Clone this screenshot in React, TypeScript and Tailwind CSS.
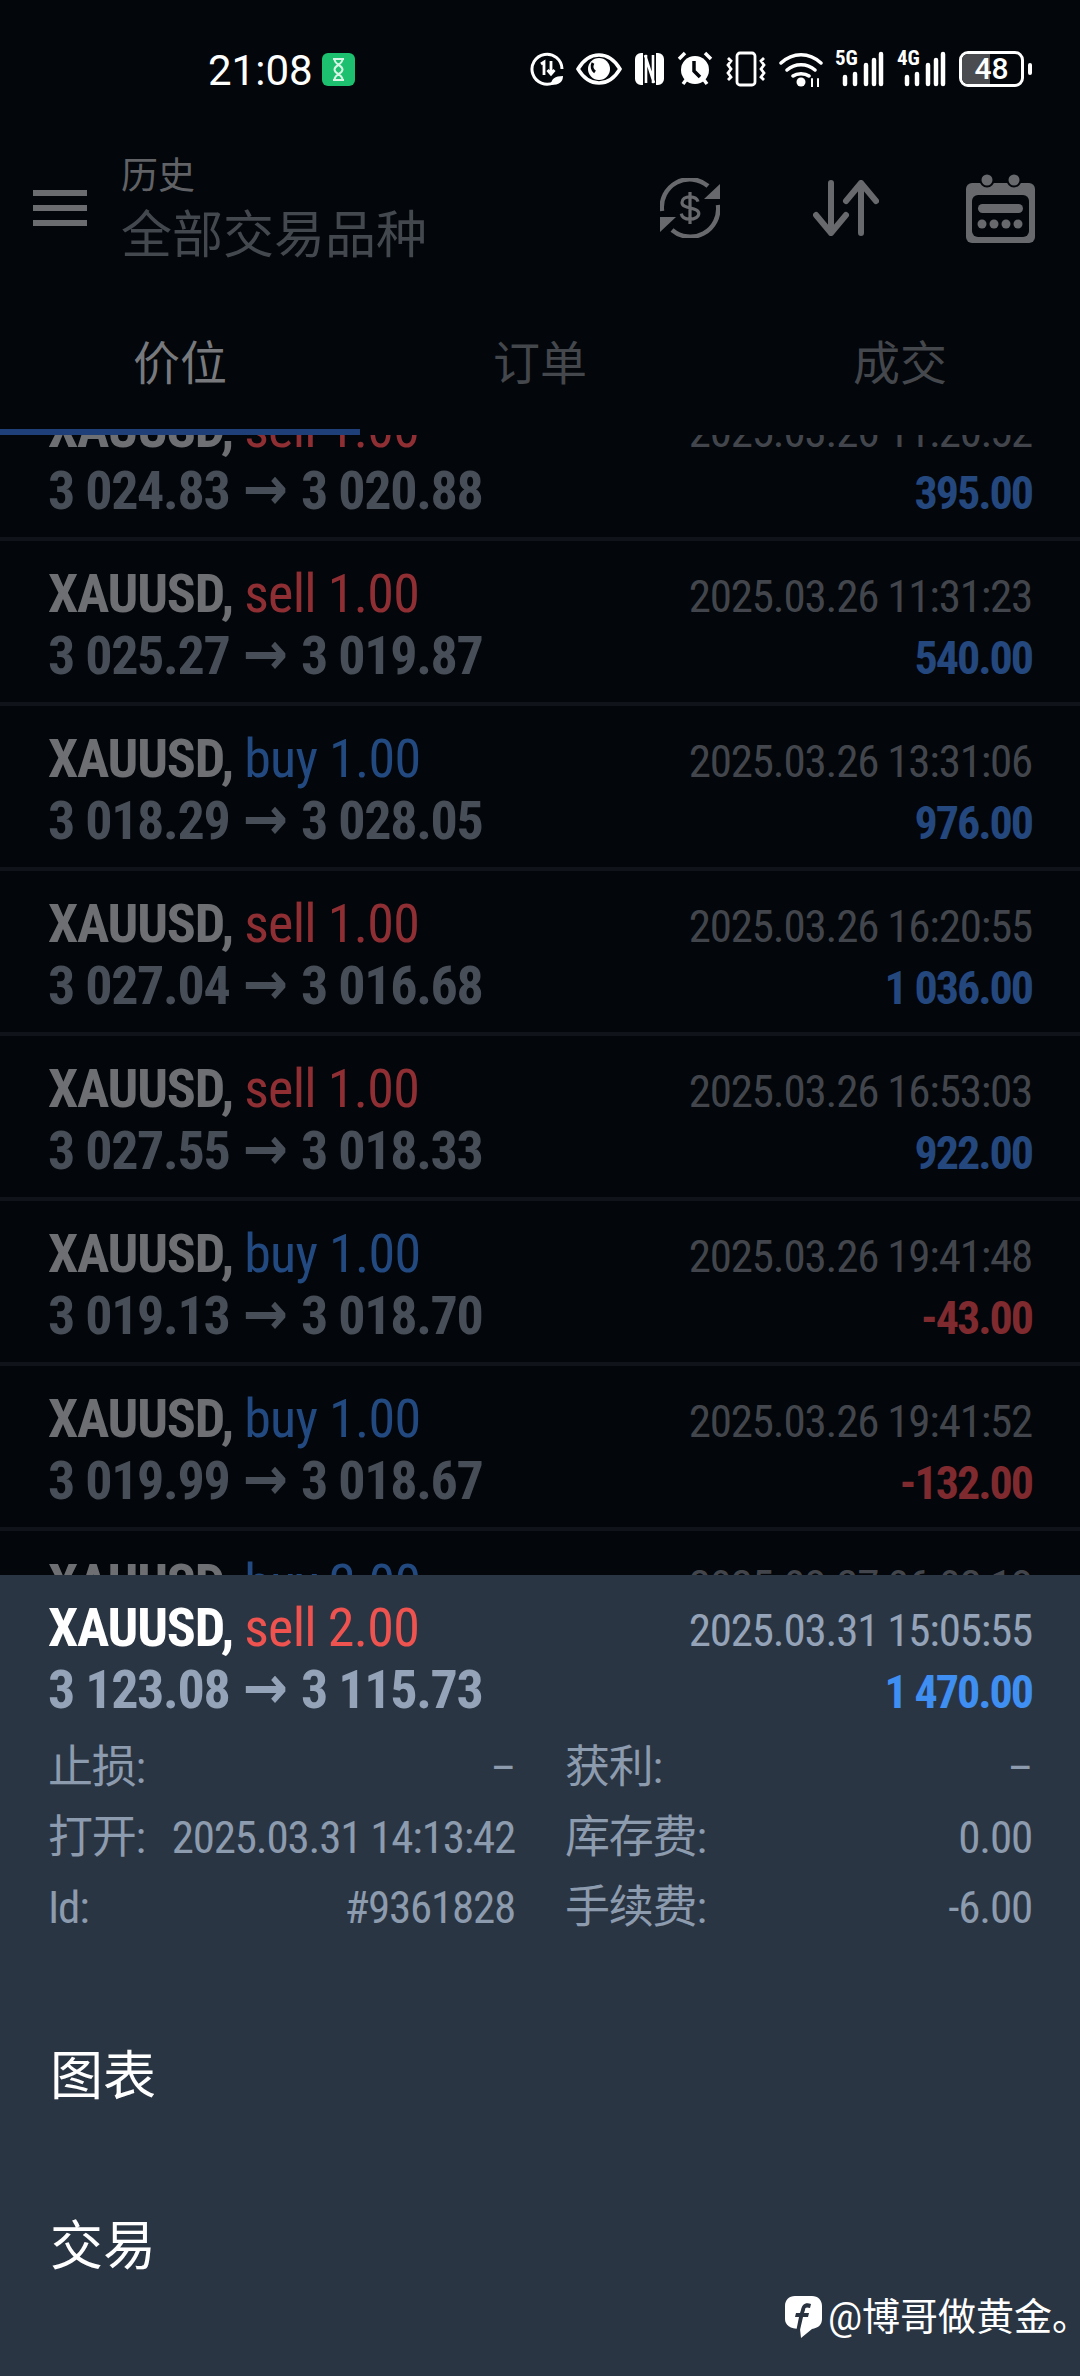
const trades = [
  { side: 'sell', lots: '1.00', prices: '3 024.83 → 3 020.88', date: '2025.03.26 11:20:52', profit: '395.00' },
  { side: 'sell', lots: '1.00', prices: '3 025.27 → 3 019.87', date: '2025.03.26 11:31:23', profit: '540.00' },
  { side: 'buy', lots: '1.00', prices: '3 018.29 → 3 028.05', date: '2025.03.26 13:31:06', profit: '976.00' },
  { side: 'sell', lots: '1.00', prices: '3 027.04 → 3 016.68', date: '2025.03.26 16:20:55', profit: '1 036.00' },
  { side: 'sell', lots: '1.00', prices: '3 027.55 → 3 018.33', date: '2025.03.26 16:53:03', profit: '922.00' },
  { side: 'buy', lots: '1.00', prices: '3 019.13 → 3 018.70', date: '2025.03.26 19:41:48', profit: '-43.00' },
  { side: 'buy', lots: '1.00', prices: '3 019.99 → 3 018.67', date: '2025.03.26 19:41:52', profit: '-132.00' },
  { side: 'buy', lots: '2.00', prices: '3 020.14 → 3 031.20', date: '2025.03.27 06:02:13', profit: '2 212.00' },
]

function StatusIcons() {
  return (
    <div className="flex items-center gap-[12px] text-white">
      {/* data saver */}
      <svg width="34" height="34" viewBox="0 0 34 34" fill="none" stroke="currentColor">
        <path d="M24 30.5A15 15 0 1 1 32 17" strokeWidth="3" />
        <path d="M11 12l3-2v13M21 9v13m-3.5-4l3.5 4 3.500-4" strokeWidth="2.800" />
        <path d="M21 33c0-6 4-9 12-9 0 6-4 9-12 9z" fill="currentColor" stroke="none" />
      </svg>
      {/* eye comfort */}
      <svg width="46" height="34" viewBox="0 0 46 34" fill="none" stroke="currentColor">
        <path d="M2 17C8 7 15 3 23 3s15 4 21 14c-6 10-13 14-21 14S8 27 2 17z" strokeWidth="3.500" />
        <circle cx="23" cy="17" r="11" fill="currentColor" stroke="none" />
        <path d="M17 11a7 7 0 0 0 2 9" stroke="#03060b" strokeWidth="3" />
      </svg>
      {/* nfc */}
      <svg width="31" height="34" viewBox="0 0 31 34" fill="none">
        <path d="M9 1H7a6 6 0 0 0-6 6v20a6 6 0 0 0 6 6h2zM22 1h2a6 6 0 0 1 6 6v20a6 6 0 0 1-6 6h-2z" fill="currentColor" />
        <path d="M12 3v28M19 3v28M11 3l9 28" stroke="currentColor" strokeWidth="2.600" />
      </svg>
      {/* alarm */}
      <svg width="36" height="36" viewBox="0 0 36 36" fill="currentColor">
        <circle cx="18" cy="19" r="14" />
        <path d="M17 10v10l6 6" fill="none" stroke="#03060b" strokeWidth="3.500" />
        <path d="M2 8l6-6M34 8l-6-6M6 33l3-4M30 33l-3-4" fill="none" stroke="currentColor" strokeWidth="3.500" />
      </svg>
      {/* vibrate */}
      <svg width="42" height="36" viewBox="0 0 42 36" fill="none" stroke="currentColor" strokeWidth="2.800">
        <rect x="12" y="2" width="18" height="32" rx="3" />
        <path d="M3 7l3 3-3 4 3 4-3 4 3 4-3 3M39 7l-3 3 3 4-3 4 3 4-3 4 3 3" />
      </svg>
      {/* wifi */}
      <svg width="44" height="36" viewBox="0 0 44 36" fill="none" stroke="currentColor" strokeWidth="3.500" strokeLinecap="round">
        <path d="M2 12C14 1 30 1 42 12M8 19c8-7 20-7 28 0M14 25c4-3 12-3 16 0" />
        <circle cx="22" cy="31" r="4.500" fill="currentColor" stroke="none" />
        <path d="M33 28v8M39 28v8" strokeWidth="2" />
      </svg>
      <Signal label="5G" />
      <Signal label="4G" />
      {/* battery */}
      <div className="flex items-center gap-[4px]">
        <div className="relative flex h-[36px] w-[65px] overflow-hidden rounded-[9px] border-[3px] border-white">
          <div className="w-[48%] bg-[#4a4c50]" />
          <span className="absolute inset-0 flex items-center justify-center text-[30px] font-medium leading-none">48</span>
        </div>
        <div className="h-[12px] w-[4px] rounded-full bg-white" />
      </div>
    </div>
  )
}

function Signal({ label }: { label: string }) {
  return (
    <div className="relative h-[36px] w-[50px]">
      <span className="absolute left-0 top-[-3px] text-[21px] font-bold leading-[20px] font-stretch-[75%]">{label}</span>
      <svg className="absolute inset-0" width="50" height="36" viewBox="0 0 50 36" stroke="currentColor" strokeWidth="4.500" strokeLinecap="round">
        <path d="M10 26v7M20 23v10M31 14v19M46 3v30M39 9v24" />
      </svg>
    </div>
  )
}

function ExchangeIcon() {
  return (
    <svg width="60" height="60" viewBox="0 0 60 60" fill="none" stroke="#67696d">
      <path d="M2 33A28 28 0 0 1 48 8M58 27A28 28 0 0 1 12 52" strokeWidth="4.500" />
      <path d="M60 6v15H44zM0 54V39h16z" fill="#67696d" stroke="none" />
      <path d="M40 22c-1-4-5-6-10-6-6 0-10 3-10 7 0 9 21 5 21 14 0 4-5 7-11 7-6 0-10-2-11-7M30 10v40" strokeWidth="4" transform="translate(6 6) scale(.8)" />
    </svg>
  )
}

function SortIcon() {
  return (
    <svg width="66" height="56" viewBox="0 0 66 56" fill="none" stroke="#67696d" strokeWidth="6" strokeLinecap="round" strokeLinejoin="round">
      <path d="M18 3v50M3 35l15 18 15-18M48 3v50M33 21L48 3l15 18" />
    </svg>
  )
}

function CalendarIcon() {
  return (
    <svg width="69" height="69" viewBox="0 0 69 69" fill="#67696d">
      <path d="M6 9h57a6 6 0 0 1 6 6v48a6 6 0 0 1-6 6H6a6 6 0 0 1-6-6V15a6 6 0 0 1 6-6z" />
      <circle cx="21" cy="6" r="6.500" stroke="#03060b" strokeWidth="2" />
      <circle cx="48" cy="6" r="6.500" stroke="#03060b" strokeWidth="2" />
      <rect x="6" y="21" width="57" height="42" rx="6" fill="#03060b" />
      <rect x="12" y="30" width="45" height="9" rx="4.500" />
      <circle cx="16" cy="50" r="4.500" />
      <circle cx="28" cy="50" r="4.500" />
      <circle cx="40" cy="50" r="4.500" />
      <circle cx="52" cy="50" r="4.500" />
    </svg>
  )
}

function FacebookMark() {
  return (
    <svg width="37" height="42" viewBox="0 0 37 42">
      <path d="M10 0h17c6 0 10 4 10 10v13c0 6-4 9-10 10l-11 9-1-9C5 33 0 29 0 23V10C0 4 4 0 10 0z" fill="#fff" />
      <path d="M26 8c-6-2-9 1-10 6l-1 3h-4l-1 4h4l-3 15 4-2 3-13h5l1-4h-5l1-3c0-3 2-3 5-2z" fill="#29323f" />
    </svg>
  )
}

// open → close, the arrow is set in a heavier face than Roboto's
function Prices({ value, className }: { value: string; className: string }) {
  const [open, close] = value.split(' → ')
  return (
    <span className={`text-[54px] font-bold leading-[59px] tracking-[-1.3px] font-stretch-[75%] ${className}`}>
      {open} <span className="mx-[2px] font-['DejaVu_Sans'] text-[60px] leading-none tracking-normal">→</span> {close}
    </span>
  )
}

function Row({ t }: { t: (typeof trades)[number] }) {
  const loss = t.profit.startsWith('-')
  return (
    <div className="h-[165px] shrink-0 border-b-[4px] border-[#10141a] px-[48px] pt-[23px]">
      <div className="flex h-[59px] items-baseline justify-between">
        <span className="text-[54px] leading-[59px] tracking-[-1.2px] font-stretch-[75%]">
          <b className="font-bold text-[#6d6f72]">XAUUSD,</b>{' '}
          <span className={`tracking-[-0.7px] ${t.side === 'sell' ? 'text-[#8f2f34]' : 'text-[#234a80]'}`}>{t.side} {t.lots}</span>
        </span>
        <span className="text-[45px] leading-[59px] tracking-[-1.2px] text-[#42464c] font-stretch-[75%]">{t.date}</span>
      </div>
      <div className="flex h-[59px] items-baseline justify-between">
        <Prices value={t.prices} className="text-[#484e57]" />
        <span className={`text-[46px] font-bold leading-[59px] tracking-[-2px] font-stretch-[75%] ${loss ? 'text-[#7f2a2e]' : 'text-[#24487e]'}`}>{t.profit}</span>
      </div>
    </div>
  )
}

function Detail({ label, value }: { label: string; value: string }) {
  return (
    <div className="flex h-[70px] items-center justify-between text-[45px] tracking-[-1.2px] text-[#8d9bae] font-stretch-[75%]">
      <span>{label}</span>
      <span>{value}</span>
    </div>
  )
}

export default function App() {
  return (
    <div className="relative flex h-[2376px] w-[1080px] flex-col overflow-hidden bg-[#03060b] font-[Roboto,'Noto_Sans_CJK_SC',sans-serif]">
      {/* Status bar */}
      <div className="flex h-[138px] shrink-0 items-center justify-between pl-[208px] pr-[48px] text-white">
        <div className="flex items-center gap-[9px]">
          <span className="mt-[3px] text-[42px] leading-none">21:08</span>
          <div className="flex h-[33px] w-[33px] items-center justify-center rounded-[6px] bg-[#1cc06e]">
            <svg width="13" height="23" viewBox="0 0 13 23" fill="none" stroke="#d8f5e6" strokeWidth="2">
              <path d="M1 1h11M1 22h11M2.500 1c0 6 8 6 8 10.500S2.500 16 2.500 22M10.500 1c0 6-8 6-8 10.500S10.500 16 10.500 22" />
            </svg>
          </div>
        </div>
        <StatusIcons />
      </div>

      {/* Toolbar */}
      <div className="flex h-[140px] shrink-0 items-center pl-[33px] pr-[45px]">
        <div className="flex h-[36px] w-[54px] flex-col justify-between">
          <div className="h-[6px] bg-[#6a6c70]" />
          <div className="h-[6px] bg-[#6a6c70]" />
          <div className="h-[6px] bg-[#6a6c70]" />
        </div>
        <div className="ml-[34px] flex-1 pt-[6px]">
          <div className="text-[37px] leading-[44px] text-[#606266]">历史</div>
          <div className="mt-[6px] text-[51px] leading-[62px] text-[#43474e]">全部交易品种</div>
        </div>
        <div className="flex items-center">
          <ExchangeIcon />
          <div className="ml-[93px] mr-[87px]">
            <SortIcon />
          </div>
          <CalendarIcon />
        </div>
      </div>

      {/* Tabs */}
      <div className="relative z-10 h-[157px] shrink-0 bg-[#03060b] pt-[15px]">
        <div className="grid h-[142px] grid-cols-3 text-center text-[47px]">
          <div className="flex items-center justify-center text-[#77797c]">价位</div>
          <div className="flex items-center justify-center text-[#44474c]">订单</div>
          <div className="flex items-center justify-center text-[#44474c]">成交</div>
        </div>
        <div className="absolute bottom-0 left-0 h-[6px] w-[360px] bg-[#1f3f78]" />
      </div>

      {/* Trade list, scrolled partway */}
      <div className="min-h-0 flex-1 overflow-hidden">
        <div className="-mt-[59px] flex flex-col">
          {trades.map((t) => (
            <Row key={t.date} t={t} />
          ))}
        </div>
      </div>

      {/* Selected trade sheet */}
      <div className="relative h-[801px] shrink-0 bg-[#2a3543] pt-[23px]">
        <div className="px-[48px]">
          <div className="flex h-[59px] items-baseline justify-between">
            <span className="text-[54px] leading-[59px] tracking-[-1.2px] font-stretch-[75%]">
              <b className="font-bold text-white">XAUUSD,</b> <span className="tracking-[-0.7px] text-[#ef5350]">sell 2.00</span>
            </span>
            <span className="text-[45px] leading-[59px] tracking-[-1.2px] text-[#94a3b8] font-stretch-[75%]">2025.03.31 15:05:55</span>
          </div>
          <div className="flex h-[59px] items-baseline justify-between">
            <Prices value="3 123.08 → 3 115.73" className="text-[#94a3b8]" />
            <span className="text-[46px] font-bold leading-[59px] tracking-[-2px] text-[#3f8ef2] font-stretch-[75%]">1 470.00</span>
          </div>
          <div className="mt-[17px] grid grid-cols-2 gap-x-[50px]">
            <Detail label="止损:" value="–" />
            <Detail label="获利:" value="–" />
            <Detail label="打开:" value="2025.03.31 14:13:42" />
            <Detail label="库存费:" value="0.00" />
            <Detail label="Id:" value="#9361828" />
            <Detail label="手续费:" value="-6.00" />
          </div>
        </div>
        <div className="mt-[50px] px-[50px] text-[53px] text-white">
          <div className="flex h-[170px] items-center">图表</div>
          <div className="flex h-[170px] items-center">交易</div>
        </div>
        {/* Watermark */}
        <div className="absolute bottom-[38px] left-[785px] flex items-center gap-[6px] text-[38px] leading-none whitespace-nowrap text-white">
          <FacebookMark />
          <span>@博哥做黄金。</span>
        </div>
      </div>
    </div>
  )
}
